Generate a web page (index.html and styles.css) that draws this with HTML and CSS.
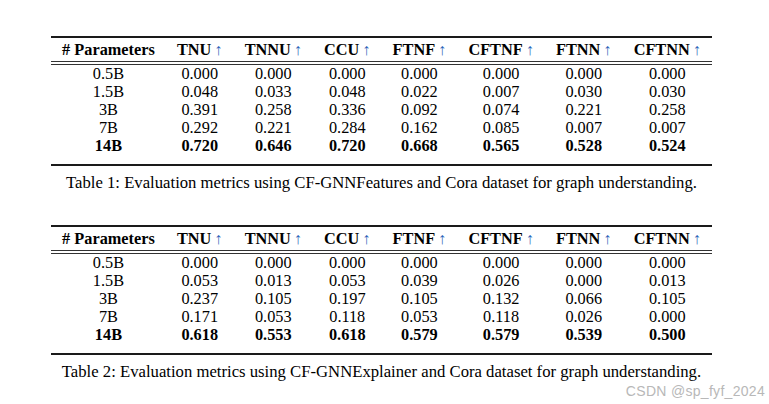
FILE: index.html
```html
<!DOCTYPE html>
<html>
<head>
<meta charset="utf-8">
<link rel="stylesheet" href="styles.css">
</head>
<body>
<div class="page">
  <section class="block">
    <table class="tbl">
      <thead>
        <tr>
          <th># Parameters</th>
          <th>TNU<span class="up">↑</span></th>
          <th>TNNU<span class="up">↑</span></th>
          <th>CCU<span class="up">↑</span></th>
          <th>FTNF<span class="up">↑</span></th>
          <th>CFTNF<span class="up">↑</span></th>
          <th>FTNN<span class="up">↑</span></th>
          <th>CFTNN<span class="up">↑</span></th>
        </tr>
      </thead>
      <tbody>
        <tr><td>0.5B</td><td>0.000</td><td>0.000</td><td>0.000</td><td>0.000</td><td>0.000</td><td>0.000</td><td>0.000</td></tr>
        <tr><td>1.5B</td><td>0.048</td><td>0.033</td><td>0.048</td><td>0.022</td><td>0.007</td><td>0.030</td><td>0.030</td></tr>
        <tr><td>3B</td><td>0.391</td><td>0.258</td><td>0.336</td><td>0.092</td><td>0.074</td><td>0.221</td><td>0.258</td></tr>
        <tr><td>7B</td><td>0.292</td><td>0.221</td><td>0.284</td><td>0.162</td><td>0.085</td><td>0.007</td><td>0.007</td></tr>
        <tr class="best"><td>14B</td><td>0.720</td><td>0.646</td><td>0.720</td><td>0.668</td><td>0.565</td><td>0.528</td><td>0.524</td></tr>
      </tbody>
    </table>
    <p class="caption">Table 1: Evaluation metrics using CF-GNNFeatures and Cora dataset for graph understanding.</p>
  </section>
  <section class="block second">
    <table class="tbl">
      <thead>
        <tr>
          <th># Parameters</th>
          <th>TNU<span class="up">↑</span></th>
          <th>TNNU<span class="up">↑</span></th>
          <th>CCU<span class="up">↑</span></th>
          <th>FTNF<span class="up">↑</span></th>
          <th>CFTNF<span class="up">↑</span></th>
          <th>FTNN<span class="up">↑</span></th>
          <th>CFTNN<span class="up">↑</span></th>
        </tr>
      </thead>
      <tbody>
        <tr><td>0.5B</td><td>0.000</td><td>0.000</td><td>0.000</td><td>0.000</td><td>0.000</td><td>0.000</td><td>0.000</td></tr>
        <tr><td>1.5B</td><td>0.053</td><td>0.013</td><td>0.053</td><td>0.039</td><td>0.026</td><td>0.000</td><td>0.013</td></tr>
        <tr><td>3B</td><td>0.237</td><td>0.105</td><td>0.197</td><td>0.105</td><td>0.132</td><td>0.066</td><td>0.105</td></tr>
        <tr><td>7B</td><td>0.171</td><td>0.053</td><td>0.118</td><td>0.053</td><td>0.118</td><td>0.026</td><td>0.000</td></tr>
        <tr class="best"><td>14B</td><td>0.618</td><td>0.553</td><td>0.618</td><td>0.579</td><td>0.579</td><td>0.539</td><td>0.500</td></tr>
      </tbody>
    </table>
    <p class="caption">Table 2: Evaluation metrics using CF-GNNExplainer and Cora dataset for graph understanding.</p>
  </section>
  <div class="watermark">CSDN @sp_fyf_2024</div>
</div>
</body>
</html>
```
FILE: styles.css
```css
html, body {
  margin: 0;
  padding: 0;
  background: #fff;
}

.page {
  width: 769px;
  height: 404px;
  padding-top: 36px;
  box-sizing: border-box;
  font-family: "Liberation Serif", "Times New Roman", serif;
  font-size: 16.3px;
  color: #000;
  position: relative;
  overflow: hidden;
}

.block {
  width: 661px;
  margin-left: 51px;
}

.block.second {
  margin-top: 32px;
}

.tbl {
  border-collapse: collapse;
  width: 661px;
}

.tbl thead tr {
  border-top: 2px solid #1a1a1a;
  border-bottom: 4px double #333;
}

.tbl th {
  padding: 3px 11px 2px;
  line-height: 18px;
  font-weight: bold;
  white-space: nowrap;
  text-align: center;
}

.tbl td {
  padding: 0 11px;
  line-height: 18px;
  text-align: center;
  white-space: nowrap;
}

.tbl tbody {
  border-bottom: 2px solid #1a1a1a;
}

.tbl tbody tr.best td {
  font-weight: bold;
  padding-bottom: 9px;
}

.up {
  font-family: "Liberation Serif", serif;
  font-weight: normal;
  margin-left: 3px;
  color: #2d63b8;
}

.caption {
  margin: 7px 0 0;
  line-height: 20px;
  font-size: 16.7px;
  text-align: center;
  white-space: nowrap;
}

.watermark {
  position: absolute;
  right: 4px;
  bottom: 5px;
  font-family: "Liberation Sans", Arial, sans-serif;
  font-size: 14px;
  color: #b8b8b8;
  letter-spacing: 0.3px;
}
```
